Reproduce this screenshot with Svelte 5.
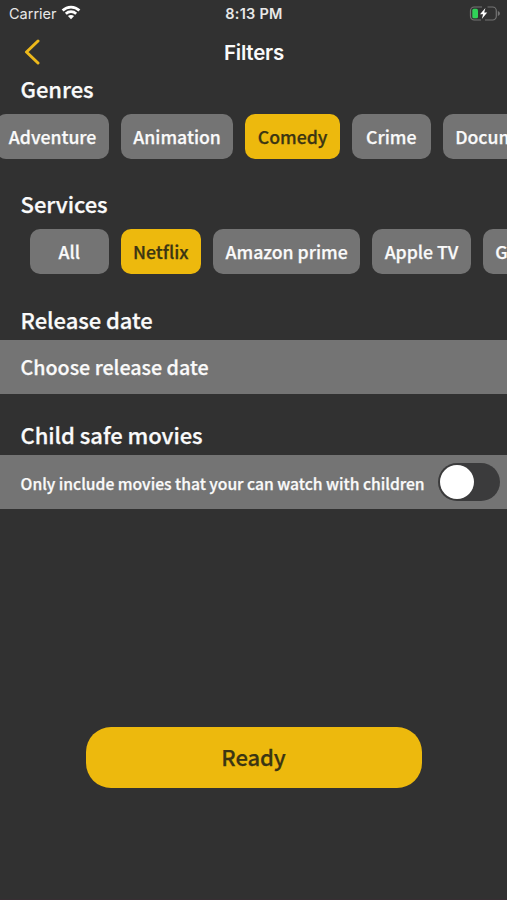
<script>
  const genres = ['Adventure', 'Animation', 'Comedy', 'Crime', 'Documentary'];
  const services = ['All', 'Netflix', 'Amazon prime', 'Apple TV', 'Google Play'];
  let genre = $state('Comedy');
  let service = $state('Netflix');
  let childSafe = $state(false);
</script>

<div class="screen">
  <div class="status">
    <div class="carrier">
      <span>Carrier</span>
      <svg width="20" height="15" viewBox="0 0 20 15" fill="none" stroke="#fff" stroke-width="2.7">
        <path d="M1.6 5.5C6.4.9 13.6.9 18.4 5.5" />
        <path d="M4.8 8.8c3-2.8 7.4-2.8 10.4 0" />
        <path d="M10 14.2 6.9 11.1c1.8-1.5 4.4-1.5 6.2 0z" fill="#fff" stroke="none" />
      </svg>
    </div>
    <span class="time">8:13 PM</span>
    <svg class="battery" width="32" height="16" viewBox="0 0 32 16">
      <path d="M13 1H5.2A3.7 3.7 0 0 0 1.5 4.7v5.6A3.7 3.7 0 0 0 5.2 14H12M18.5 1h5.1a3.7 3.7 0 0 1 3.7 3.7v5.6a3.7 3.7 0 0 1-3.7 3.7H16" fill="none" stroke="#747474" stroke-width="1.2" />
      <rect x="3.3" y="2.8" width="5.7" height="9.5" rx="1.6" fill="#30d158" />
      <path d="M16.4 2 11 8.3h3.1L12.8 13l5.4-6.5h-3z" fill="#fff" />
      <path d="M28.8 5c2.8 1 2.8 4 0 5z" fill="#747474" />
    </svg>
  </div>

  <header>
    <button class="back" aria-label="Back">
      <svg width="16" height="26" viewBox="0 0 16 26"><path d="M14 2 2.5 13 14 24" fill="none" stroke="#edb91b" stroke-width="3" stroke-linecap="round" stroke-linejoin="round" /></svg>
    </button>
    <h1>Filters</h1>
  </header>

  <section>
    <h2>Genres</h2>
    <div class="chips scrolled">
      {#each genres as name}
        <button class={['chip', { on: genre === name }]} onclick={() => (genre = name)}>{name}</button>
      {/each}
    </div>
  </section>

  <section>
    <h2>Services</h2>
    <div class="chips">
      {#each services as name}
        <button class={['chip', { on: service === name }]} onclick={() => (service = name)}>{name}</button>
      {/each}
    </div>
  </section>

  <section>
    <h2>Release date</h2>
    <button class="row">Choose release date</button>
  </section>

  <section>
    <h2>Child safe movies</h2>
    <div class="row small">
      <span>Only include movies that your can watch with children</span>
      <button class="switch" class:checked={childSafe} role="switch" aria-checked={childSafe} aria-label="Child safe movies" onclick={() => (childSafe = !childSafe)}><i></i></button>
    </div>
  </section>

  <button class="ready">Ready</button>
</div>

<style>
  :global(body) { margin: 0; background: #313131; }
  .screen {
    box-sizing: border-box; width: 507px; height: 900px; overflow: hidden;
    display: flex; flex-direction: column;
    background: #313131; color: #fafafa; border-bottom: 1px solid #382e33;
    font-family: "Noto Sans CJK SC", "Noto Sans", sans-serif; font-weight: 500;
    -webkit-text-stroke: 0.25px currentColor;
  }
  button { margin: 0; padding: 0; border: 0; background: none; color: inherit; font: inherit; letter-spacing: inherit; white-space: nowrap; }
  .status {
    height: 27px; padding: 0 6px 0 9px; display: grid; grid-template-columns: 1fr auto 1fr; align-items: center;
    font: 400 14.5px "Inter", sans-serif; color: #e8e8e8; -webkit-text-stroke: 0;
  }
  .carrier { display: flex; align-items: center; gap: 4px; }
  .carrier svg { margin-top: -2px; }
  .time { font-weight: 600; letter-spacing: 0.25px; margin-right: 2px; }
  .battery { justify-self: end; }
  header { height: 50px; display: grid; grid-template-columns: 1fr auto 1fr; align-items: center; }
  .back { justify-self: start; margin-left: 24px; height: 26px; }
  .back svg { display: block; }
  h1 { margin: 0; padding-left: 1px; font: 600 20.5px "Inter", sans-serif; letter-spacing: -0.2px; -webkit-text-stroke: 0; }
  section { height: 115.3px; flex: none; }
  h2 { margin: 0; padding-left: 20.6px; height: 37px; line-height: 22px; font-size: 22px; font-weight: 500; letter-spacing: -0.06px; }
  .chips { display: flex; gap: 12.2px; padding-left: 30px; }
  .scrolled { margin-left: -33.6px; }
  .chip { flex: none; box-sizing: border-box; min-width: 78.5px; height: 45px; padding: 0 12.4px; border-radius: 10px; background: #747474; font-size: 17.7px; line-height: 45px; letter-spacing: -0.02px; }
  .on { background: #edb90d; color: #3b3513; }
  .row { box-sizing: border-box; width: 507px; height: 54px; margin-top: -5px; padding: 0 7.5px 0 20.6px; display: flex; align-items: center; justify-content: space-between; background: #747474; font-size: 19.7px; letter-spacing: -0.01px; }
  .small { font-size: 15.7px; letter-spacing: -0.02px; white-space: nowrap; }
  .small span { padding-top: 4px; }
  .switch { flex: none; box-sizing: border-box; width: 62px; height: 38px; border-radius: 19px; background: #3b3b3c; padding: 2px; display: flex; }
  .switch.checked { justify-content: flex-end; background: #30d158; }
  .switch i { width: 34px; height: 34px; border-radius: 50%; background: #fff; }
  .ready { align-self: center; width: 336px; height: 61px; margin-top: 188.4px; padding-bottom: 3px; border-radius: 25px; background: #edb90d; color: #3b3513; font-size: 22px; letter-spacing: -0.06px; }
</style>
